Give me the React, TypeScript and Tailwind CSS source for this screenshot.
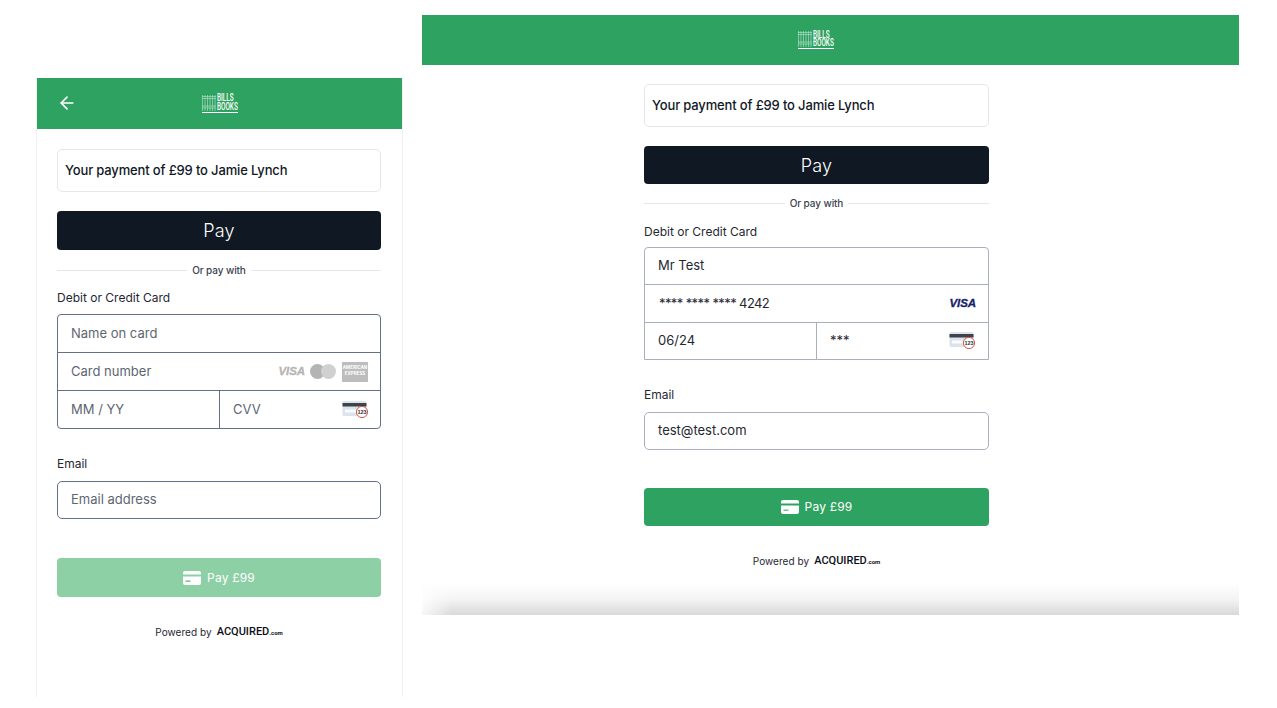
import { ArrowLeft } from "lucide-react";

const font = { fontFamily: "Inter, 'Open Sans', sans-serif" };

const Logo = () => (
  <div className="flex flex-col w-[36px] text-white">
    <div className="flex items-center gap-px h-[16px]">
      <svg width="14" height="16" viewBox="0 0 14 16" className="opacity-60 shrink-0">
        <path d="M0.5 0v16M3 0v16M5.5 0v16M8 0v16M10.5 0v16M13 0v16M0 1.5h14M0 3.5h14M0 11h14M0 13h14" stroke="#fff" strokeWidth="0.7" fill="none" />
      </svg>
      <div className="w-[21px] text-[10px] leading-[8.5px] font-medium font-['Roboto',sans-serif] origin-left [transform:scaleX(0.64)]">
        BILLS
        <br />
        BOOKS
      </div>
    </div>
    <div className="h-px bg-white mt-px" />
  </div>
);

const VisaMark = ({ muted }: { muted?: boolean }) => (
  <span className={`text-[11.5px] font-extrabold italic tracking-[-0.1px] [-webkit-text-stroke:0.3px] font-['Liberation_Sans',sans-serif] ${muted ? "text-[#b5b5b5] -mr-[1px]" : "text-[#14216b]"}`}>VISA</span>
);

const CvvIcon = () => (
  <svg width="27" height="20" viewBox="0 0 27 20" className="shrink-0">
    <rect x="0.5" y="1" width="24" height="15" rx="1.5" fill="#dbe3ee" />
    <rect x="0.5" y="3" width="24" height="3.5" fill="#3f4348" />
    <rect x="3" y="9.5" width="11" height="3" fill="#fbfbfb" />
    <circle cx="20" cy="12" r="5.6" fill="#fff" stroke="#d9574f" strokeWidth="1" />
    <text x="20" y="14" textAnchor="middle" fontSize="5.5" fontWeight="800" fill="#333" fontFamily="Liberation Sans, sans-serif">123</text>
  </svg>
);

const CardGlyph = () => (
  <svg width="18" height="14" viewBox="0 0 18 14" className="shrink-0">
    <path d="M2 0h14a2 2 0 0 1 2 2v1.5H0V2a2 2 0 0 1 2-2z" fill="#fff" />
    <path d="M0 5.5h18V12a2 2 0 0 1-2 2H2a2 2 0 0 1-2-2z" fill="#fff" />
    <rect x="2.5" y="9.5" width="5" height="1.4" fill="#2ea260" opacity="0.7" />
  </svg>
);

const Divider = ({ top }: { top: string }) => (
  <div className={`flex items-center gap-[5px] h-[10px] ${top}`}>
    <div className="flex-1 h-px bg-[#e4e7ec]" />
    <span className="text-[10px] font-medium text-[#3b4350] tracking-[-0.1px]">Or pay with</span>
    <div className="flex-1 h-px bg-[#e4e7ec]" />
  </div>
);

const Powered = ({ top }: { top: string }) => (
  <div className={`flex items-center justify-center gap-[5px] ${top}`}>
    <span className="text-[10px] tracking-[0.05px] text-[#1f2733]">Powered by</span>
    <span className="text-[11px] font-medium text-[#0b0f17] font-['Roboto',sans-serif]">
      ACQUIRED<span className="text-[6px] font-bold">.com</span>
    </span>
  </div>
);

const Summary = () => (
  <div className="h-[43px] flex items-center px-[7px] border border-[#e4e7ec] rounded-[5px] text-[13px] font-medium text-[#111827] tracking-[-0.15px]">
    Your payment of £99 to Jamie Lynch
  </div>
);

const ApplePay = ({ height }: { height: string }) => (
  <div className={`mt-[19px] flex items-center justify-center rounded-[4px] bg-[#101824] text-white text-[18px] font-light tracking-[0.2px] ${height}`}>
    Pay
  </div>
);

const LeftPanel = () => (
  <section className="w-[367px] h-[619px] mt-[78px] border-x border-[#eff1f4] flex flex-col shrink-0">
    <header className="h-[51px] bg-[#2ea260] flex items-center justify-center relative">
      <ArrowLeft size={20} strokeWidth={2} className="absolute left-[20px] top-[15px] text-white" />
      <Logo />
    </header>
    <div className="px-[20px] pt-[20px] flex-1 w-[364px]">
      <Summary />
      <ApplePay height="h-[39px]" />
      <Divider top="mt-[15px]" />
      <div className="mt-[16px] text-[12px] text-[#1f2733] h-[14px] leading-[14px]">Debit or Credit Card</div>
      <div className="mt-[9px] border border-[#64708a] rounded-[4px] text-[13px] text-[#5e6672]">
        <div className="h-[38px] flex items-center px-[13px] border-b border-[#64708a]">Name on card</div>
        <div className="h-[38px] flex items-center justify-between pl-[13px] pr-[12px] border-b border-[#64708a]">
          <span>Card number</span>
          <div className="flex items-center gap-[6px]">
            <VisaMark muted />
            <div className="flex">
              <div className="size-[15px] rounded-full bg-[#b4b4b4]" />
              <div className="size-[15px] rounded-full bg-[#d0d0d0] -ml-[4px]" />
            </div>
            <div className="w-[26px] h-[20px] bg-[#bdbdbd] text-[4.5px] leading-[6px] text-white text-center pt-[3px] font-bold">AMERICAN EXPRESS</div>
          </div>
        </div>
        <div className="h-[37px] flex">
          <div className="w-[162px] flex items-center px-[13px] border-r border-[#64708a]">MM / YY</div>
          <div className="flex-1 flex items-center justify-between pl-[13px] pr-[11px]">
            <span>CVV</span>
            <CvvIcon />
          </div>
        </div>
      </div>
      <div className="mt-[28px] text-[12px] text-[#1f2733] h-[14px] leading-[14px]">Email</div>
      <div className="mt-[10px] h-[38px] flex items-center px-[13px] border border-[#64708a] rounded-[5px] text-[13px] text-[#5e6672]">Email address</div>
      <div className="mt-[39px] h-[39px] flex items-center justify-center gap-[6px] rounded-[4px] bg-[#8dd0a6] text-white text-[12px] tracking-[0.2px]">
        <CardGlyph />
        Pay £99
      </div>
      <Powered top="mt-[27px]" />
    </div>
  </section>
);

const RightPanel = () => (
  <section className="w-[817px] h-[600px] mt-[15px] ml-[19px] flex flex-col shrink-0">
    <header className="h-[50px] shrink-0 flex">
      <div className="w-full bg-[#2ea260] flex items-center pl-[376px]">
        <Logo />
      </div>
    </header>
    <div className="w-[345px] ml-[222px] pt-[19px]">
      <Summary />
      <ApplePay height="h-[38px]" />
      <Divider top="mt-[14px]" />
      <div className="mt-[17px] text-[12px] text-[#1f2733] h-[14px] leading-[14px]">Debit or Credit Card</div>
      <div className="mt-[8px] border border-[#a9b0bb] rounded-t-[4px] text-[13px] text-[#1f2733]">
        <div className="h-[37px] flex items-center px-[13px] border-b border-[#a9b0bb]">Mr Test</div>
        <div className="h-[38px] flex items-center justify-between pl-[14px] pr-[12px] border-b border-[#a9b0bb]">
          <span className="tracking-[-0.6px]">**** **** **** 4242</span>
          <VisaMark />
        </div>
        <div className="h-[36px] flex">
          <div className="w-[172px] flex items-center px-[13px] border-r border-[#a9b0bb]">06/24</div>
          <div className="flex-1 flex items-center justify-between pl-[13px] pr-[12px]">
            <span>***</span>
            <CvvIcon />
          </div>
        </div>
      </div>
      <div className="mt-[28px] text-[12px] text-[#1f2733] h-[14px] leading-[14px]">Email</div>
      <div className="mt-[10px] h-[38px] flex items-center px-[13px] border border-[#a9b0bb] rounded-[5px] text-[13px] text-[#1f2733]">test@test.com</div>
      <div className="mt-[38px] h-[38px] flex items-center justify-center gap-[6px] rounded-[4px] bg-[#2ea260] text-white text-[12px] tracking-[0.2px]">
        <CardGlyph />
        Pay £99
      </div>
      <Powered top="mt-[27px]" />
    </div>
    <div className="mt-auto h-[32px] relative bg-gradient-to-b from-white via-[#f4f4f4] to-[#d9d9d9]">
      <div className="absolute inset-y-0 left-0 w-[30px] bg-gradient-to-r from-white to-transparent opacity-80" />
    </div>
  </section>
);

export default function App() {
  return (
    <div style={font} className="h-[708px] w-[1277px] bg-white flex items-start pl-[36px] overflow-hidden">
      <LeftPanel />
      <RightPanel />
    </div>
  );
}
